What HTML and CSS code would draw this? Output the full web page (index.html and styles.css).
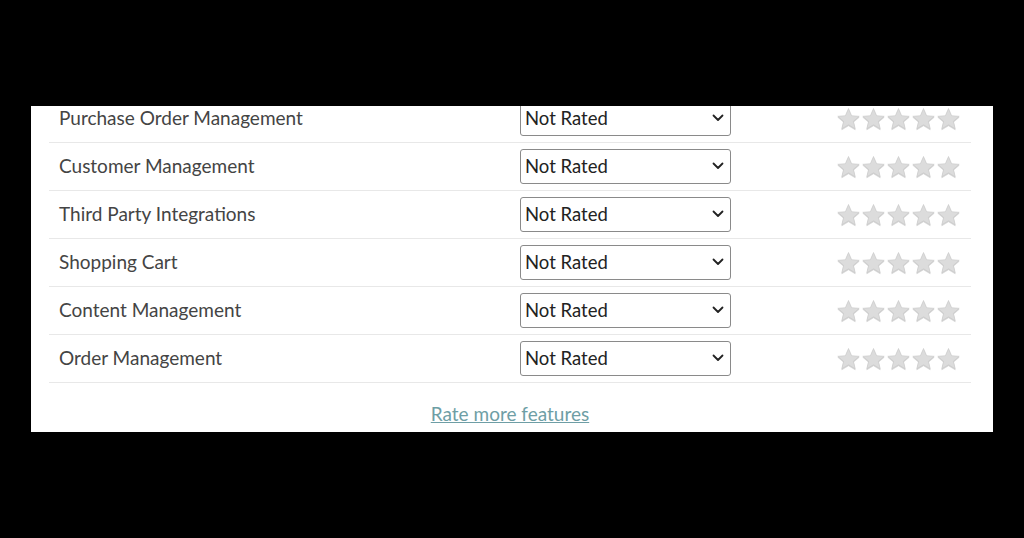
FILE: index.html
```html
<!DOCTYPE html>
<html lang="en">

<head>
    <meta charset="UTF-8">
    <meta name="viewport" content="width=device-width, initial-scale=1.0">
    <title>Feature Ratings</title>
    <link rel="stylesheet" href="styles.css">
</head>

<body>
    <svg width="0" height="0" class="defs">
        <defs>
            <symbol id="star" viewBox="0 0 24 24">
                <path d="M12 1.5l3.1 7.2 7.6.6-5.8 5 1.8 7.5L12 17.8l-6.7 4 1.8-7.5-5.8-5 7.6-.6z" fill="#dcdcdc" stroke="#c8c8c8" stroke-width=".6" stroke-linejoin="round"/>
            </symbol>
            <symbol id="chevron" viewBox="0 0 12 8">
                <path d="M1.5 1.5L6 6l4.5-4.5" fill="none" stroke="#222" stroke-width="1.8" stroke-linecap="round" stroke-linejoin="round"/>
            </symbol>
        </defs>
    </svg>

    <div id="panel">
        <div class="ratings">
            <div class="row">
                <span class="feature">Purchase Order Management</span>
                <div class="select-wrap"><select><option>Not Rated</option></select><svg class="chevron"><use href="#chevron"/></svg></div>
                <span class="stars"><svg><use href="#star"/></svg><svg><use href="#star"/></svg><svg><use href="#star"/></svg><svg><use href="#star"/></svg><svg><use href="#star"/></svg></span>
            </div>
            <div class="row">
                <span class="feature">Customer Management</span>
                <div class="select-wrap"><select><option>Not Rated</option></select><svg class="chevron"><use href="#chevron"/></svg></div>
                <span class="stars"><svg><use href="#star"/></svg><svg><use href="#star"/></svg><svg><use href="#star"/></svg><svg><use href="#star"/></svg><svg><use href="#star"/></svg></span>
            </div>
            <div class="row">
                <span class="feature">Third Party Integrations</span>
                <div class="select-wrap"><select><option>Not Rated</option></select><svg class="chevron"><use href="#chevron"/></svg></div>
                <span class="stars"><svg><use href="#star"/></svg><svg><use href="#star"/></svg><svg><use href="#star"/></svg><svg><use href="#star"/></svg><svg><use href="#star"/></svg></span>
            </div>
            <div class="row">
                <span class="feature">Shopping Cart</span>
                <div class="select-wrap"><select><option>Not Rated</option></select><svg class="chevron"><use href="#chevron"/></svg></div>
                <span class="stars"><svg><use href="#star"/></svg><svg><use href="#star"/></svg><svg><use href="#star"/></svg><svg><use href="#star"/></svg><svg><use href="#star"/></svg></span>
            </div>
            <div class="row">
                <span class="feature">Content Management</span>
                <div class="select-wrap"><select><option>Not Rated</option></select><svg class="chevron"><use href="#chevron"/></svg></div>
                <span class="stars"><svg><use href="#star"/></svg><svg><use href="#star"/></svg><svg><use href="#star"/></svg><svg><use href="#star"/></svg><svg><use href="#star"/></svg></span>
            </div>
            <div class="row">
                <span class="feature">Order Management</span>
                <div class="select-wrap"><select><option>Not Rated</option></select><svg class="chevron"><use href="#chevron"/></svg></div>
                <span class="stars"><svg><use href="#star"/></svg><svg><use href="#star"/></svg><svg><use href="#star"/></svg><svg><use href="#star"/></svg><svg><use href="#star"/></svg></span>
            </div>
        </div>
        <div class="more">
            <a href="#">Rate more features</a>
        </div>
    </div>
</body>

</html>
```

FILE: styles.css
```css
html,
body {
    margin: 0;
    height: 100%;
    background: #000;
}

body {
    font-family: "Lato", "Open Sans", sans-serif;
    padding-top: 106px;
    box-sizing: border-box;
}

.defs {
    position: absolute;
}

#panel {
    margin-left: 31px;
    width: 962px;
    height: 326px;
    background: #fff;
    overflow: hidden;
}

.ratings {
    margin: -11px 22px 0 18px;
}

.row {
    display: flex;
    align-items: center;
    height: 47px;
    border-bottom: 1px solid #e8e8e8;
}

.feature {
    width: 461px;
    padding-left: 10px;
    padding-bottom: 2px;
    font-size: 19px;
    color: #444;
}

.select-wrap {
    position: relative;
    width: 211px;
    height: 35px;
}

select {
    appearance: none;
    -webkit-appearance: none;
    width: 100%;
    height: 100%;
    padding: 0 4px 2px;
    font-family: inherit;
    font-size: 18.5px;
    color: #222;
    background: #fff;
    border: 1px solid #8a8a8a;
    border-radius: 3px;
}

.chevron {
    position: absolute;
    right: 7px;
    top: 13px;
    width: 12px;
    height: 8px;
    pointer-events: none;
}

.stars {
    display: flex;
    margin-left: 105px;
}

.stars svg {
    width: 25px;
    height: 24px;
    filter: drop-shadow(0 1px 0.5px rgba(0, 0, 0, 0.18));
}

.more {
    text-align: center;
    padding-top: 19px;
    padding-right: 4px;
}

.more a {
    font-size: 19px;
    color: #6e9ea5;
}
```
